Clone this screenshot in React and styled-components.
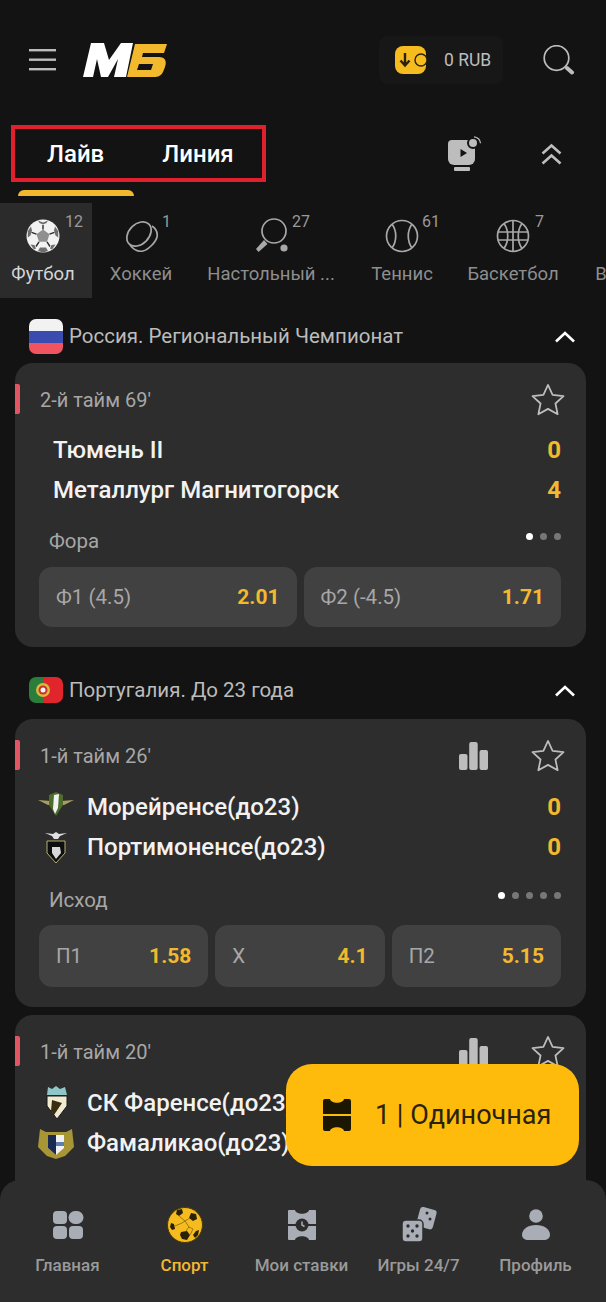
import styled, { createGlobalStyle } from 'styled-components';

const Global = createGlobalStyle`
  html, body { margin: 0; padding: 0; background: #131313; }
  * { box-sizing: border-box; }
`;

const Page = styled.div`
  position: relative;
  width: 606px;
  height: 1302px;
  overflow: hidden;
  background: #131313;
  font-family: Roboto, "Liberation Sans", sans-serif;
  color: #fff;
`;

const Header = styled.header`
  display: flex;
  align-items: center;
  height: 62px;
  margin-top: 29px;
  padding: 0 31px 0 29px;
`;

const Logo = styled.svg`
  width: 84px;
  height: 36px;
  margin-left: 27px;
`;

const Wallet = styled.div`
  display: flex;
  align-items: center;
  gap: 17px;
  width: 124px;
  height: 48px;
  margin-left: auto;
  margin-right: 40px;
  padding-left: 16px;
  background: #171717;
  border-radius: 8px;
  font-size: 17.5px;
  color: #bdbdbd;
`;

const TabsRow = styled.div`
  display: flex;
  align-items: center;
  height: 57px;
  margin: 34px 0 0 11px;
  padding-right: 44px;
`;

const TabsBox = styled.div`
  display: flex;
  align-items: center;
  width: 255px;
  height: 57px;
  border: 4px solid #e0202c;
  padding-left: 32px;
  gap: 58px;
  font-size: 24px;
  font-weight: 500;
`;

const TabTools = styled.div`
  display: flex;
  align-items: center;
  gap: 59px;
  margin-left: auto;
`;

const TabMark = styled.div`
  width: 116px;
  height: 6px;
  margin: 8px 0 0 18px;
  background: #f2b92f;
  border-radius: 6px 6px 0 0;
`;

const Sports = styled.div`
  display: flex;
  align-items: flex-start;
  height: 95px;
  margin-top: 7px;
  overflow: hidden;
`;

const Sport = styled.div`
  position: relative;
  flex: none;
  width: ${p => p.$w}px;
  height: 95px;
  display: flex;
  flex-direction: column;
  align-items: center;
  padding: 15px ${p => (p.$active ? 6 : 0)}px 0 0;
  gap: 9px;
  background: ${p => (p.$active ? '#2b2b2b' : 'transparent')};
  color: ${p => (p.$active ? '#d6d6d6' : '#8e8e8e')};
  font-size: 18.5px;
  white-space: nowrap;
`;

const SportIcon = styled.div`
  width: 36px;
  height: 36px;
`;

const Count = styled.span`
  position: absolute;
  top: 9px;
  left: calc(50% + ${p => p.$x}px);
  font-size: 16px;
  color: #9a9a9a;
`;

const League = styled.div`
  display: flex;
  align-items: center;
  height: 40px;
  margin-top: ${p => p.$mt}px;
  padding: 0 30px 0 29px;
  gap: 6px;
  font-size: 20.5px;
  color: #bcbcbc;
`;

const Flag = styled.div`
  display: flex;
  width: 34px;
  height: ${p => p.$h}px;
  border-radius: 7px;
  overflow: hidden;
  flex: none;
`;

const Chevron = styled.svg`
  width: 22px;
  height: 13px;
  margin-left: auto;
`;

const Card = styled.section`
  position: relative;
  margin: ${p => p.$mt}px 20px 0 15px;
  height: ${p => p.$h}px;
  background: #2d2d2d;
  border-radius: 18px;
  padding: 19px 25px 0 25px;
`;

const LiveMark = styled.i`
  position: absolute;
  left: 0;
  top: 21px;
  width: 5px;
  height: 30px;
  background: #e25563;
  border-radius: 0 2px 2px 0;
`;

const CardTop = styled.div`
  display: flex;
  align-items: center;
  height: 36px;
  margin-right: -6px;
  font-size: 20px;
  color: #a7a7a7;
  gap: 41px;
`;

const Period = styled.span`
  margin-right: auto;
`;

const Team = styled.div`
  display: flex;
  align-items: center;
  height: 40px;
  margin-top: ${p => p.$mt || 0}px;
  font-size: 24px;
  font-weight: 500;
  color: #f2f2f2;
  white-space: nowrap;
`;

const Crest = styled.svg`
  width: 36px;
  height: 36px;
  margin: 0 13px 0 -2px;
  flex: none;
`;

const TeamName = styled.span`
  margin-left: ${p => p.$indent || 0}px;
`;

const Score = styled.span`
  margin-left: auto;
  color: #f2b92f;
  font-weight: 700;
`;

const MarketRow = styled.div`
  display: flex;
  align-items: center;
  justify-content: space-between;
  height: 24px;
  margin: ${p => p.$mt}px 0 ${p => p.$mb}px;
  padding-left: 9px;
  font-size: 20.5px;
  color: #a7a7a7;
`;

const Dots = styled.div`
  display: flex;
  gap: 7px;
  margin-top: -9px;
`;

const Dot = styled.i`
  width: 7px;
  height: 7px;
  border-radius: 50%;
  background: ${p => (p.$on ? '#fff' : '#777')};
`;

const Odds = styled.div`
  display: flex;
  gap: 7px;
  margin-left: -1px;
`;

const Odd = styled.div`
  flex: 1;
  display: flex;
  justify-content: space-between;
  align-items: center;
  height: ${p => p.$h}px;
  padding: 0 17px;
  background: #414141;
  border-radius: 13px;
  font-size: 20.5px;
  color: #a7a7a7;
`;

const OddValue = styled.b`
  color: #f2b92f;
  font-size: 21px;
  font-weight: 700;
`;

const Slip = styled.div`
  position: absolute;
  left: 286px;
  top: 1064px;
  width: 293px;
  height: 102px;
  display: flex;
  align-items: center;
  gap: 24px;
  padding-left: 37px;
  background: #ffbb0b;
  border-radius: 26px;
  color: #2a2208;
  font-size: 27px;
  z-index: 3;
`;

const Nav = styled.nav`
  position: absolute;
  left: 0;
  right: 0;
  bottom: 0;
  height: 122px;
  display: flex;
  padding: 26px 12px 0 9px;
  background: #2d2d2d;
  border-radius: 20px 20px 0 0;
  z-index: 2;
`;

const NavItem = styled.div`
  flex: 1;
  display: flex;
  flex-direction: column;
  align-items: center;
  gap: 11px;
  font-size: 17px;
  font-weight: 500;
  color: ${p => (p.$active ? '#f2b92f' : '#9a9a9a')};
  white-space: nowrap;
`;

const NavIcon = styled.svg`
  width: 38px;
  height: 38px;
`;

const Star = () => (
  <svg width="38" height="38" viewBox="0 0 24 24" fill="none" stroke="#bdbdbd" strokeWidth="1.1" strokeLinejoin="round">
    <path d="M12 2.500l2.900 6.300 6.900.8-5.100 4.600 1.400 6.800-6.100-3.400-6.100 3.400 1.400-6.800L2.200 9.600l6.900-.8z" />
  </svg>
);

const Bars = () => (
  <svg width="29" height="28" viewBox="0 0 29 28" fill="#bdbdbd">
    <rect x="0" y="12" width="8.500" height="16" rx="2" />
    <rect x="10.200" y="0" width="8.500" height="28" rx="2" />
    <rect x="20.500" y="8" width="8.500" height="20" rx="2" />
  </svg>
);

const ChevronUp = () => (
  <Chevron viewBox="0 0 22 13" fill="none" stroke="#fff" strokeWidth="2.600">
    <path d="M2 11.500L11 3l9 8.500" />
  </Chevron>
);

const WhiteBall = () => (
  <svg width="36" height="36" viewBox="0 0 36 36">
    <circle cx="18" cy="18" r="16.500" fill="#f2f2f2" />
    <path d="M18 11.500l6.500 4.700-2.500 7.600h-8l-2.500-7.600z" fill="#8f8f8f" />
    <path d="M18 11.500V7M24.500 16.200l5-1.800M22 23.800l3 4.700M14 23.800l-3 4.700M11.500 16.200l-5-1.800" stroke="#2b2b2b" strokeWidth="1.400" />
    <path d="M13 2.500l5 2 5-2-1.500 2.500-3.500 1.500L14.500 5zM2.800 13l3.200-4.500 1 4-1.500 5-2.700 2zM33.200 13L30 8.500l-1 4 1.500 5 2.700 2zM13 33l2-3.500h6l2 3.500-5 1.500zM5.500 26.500l4 .5 1.500 3.500-2 1zM30.500 26.500l-4 .5-1.500 3.500 2 1z" fill="#6e6e6e" />
  </svg>
);

const Puck = () => (
  <svg width="36" height="36" viewBox="0 0 36 36" fill="none" stroke="#a8a8a8" strokeWidth="1.700">
    <ellipse cx="16" cy="16" rx="14" ry="10" transform="rotate(-45 16 16)" />
    <path d="M7 27c3 4 8 7 13 6 5-1 13-9 14-14 1-5-2-9-5-11" />
  </svg>
);

const Paddle = () => (
  <svg width="36" height="36" viewBox="0 0 36 36" fill="none">
    <circle cx="21" cy="13" r="12" stroke="#a8a8a8" strokeWidth="1.700" />
    <path d="M11 22l-8 9 2.500 3 9-8z" fill="#a8a8a8" />
    <circle cx="31" cy="30" r="3.600" fill="#a8a8a8" />
  </svg>
);

const Tennis = () => (
  <svg width="36" height="36" viewBox="0 0 36 36" fill="none" stroke="#a8a8a8" strokeWidth="1.700">
    <circle cx="18" cy="18" r="15.500" />
    <path d="M8 6c5 7 5 17 0 24M28 6c-5 7-5 17 0 24" />
  </svg>
);

const Basket = () => (
  <svg width="36" height="36" viewBox="0 0 36 36" fill="none" stroke="#a8a8a8" strokeWidth="1.700">
    <circle cx="18" cy="18" r="15.500" />
    <path d="M18 2.500v31M2.500 14h31M2.500 22h31M9 5.500c5 7 5 18 0 25M27 5.500c-5 7-5 18 0 25" />
  </svg>
);

const App = () => (
  <Page>
    <Global />
    <Header>
      <svg width="27" height="24" viewBox="0 0 27 24" fill="#bdbdbd">
        <rect y="1" width="27" height="2.400" />
        <rect y="10.500" width="27" height="2.400" />
        <rect y="20" width="27" height="2.400" />
      </svg>
      <Logo viewBox="0 0 84 36">
        <path d="M0 35L8 1h13l5 17L38 1h12l-7 34H31l4-18-10 18h-7l-4-18-4 18z" fill="#fff" />
        <path fillRule="evenodd" d="M52 2h32l-3 9H60l-1 4h17c6 0 8 4 6 10l-2 5c-2 4-5 5-9 5H44zM56 22l-2 6h14l2-6z" fill="#f2b92f" />
      </Logo>
      <Wallet>
        <svg width="32" height="28" viewBox="0 0 32 28">
          <rect width="31" height="28" rx="8" fill="#f6bb1f" />
          <path d="M10 7v12M5.500 14.500L10 19.500l4.500-5" fill="none" stroke="#2a2208" strokeWidth="2.400" />
          <rect x="20" y="8" width="12" height="12" rx="6" fill="#f6bb1f" stroke="#2a2208" strokeWidth="1.400" />
        </svg>
        <span>0 RUB</span>
      </Wallet>
      <svg width="32" height="30" viewBox="0 0 32 30" fill="none">
        <circle cx="13.500" cy="13" r="12.300" stroke="#bdbdbd" strokeWidth="1.700" />
        <path d="M24 23l5 4.500" stroke="#bdbdbd" strokeWidth="4" strokeLinecap="round" />
      </svg>
    </Header>
    <TabsRow>
      <TabsBox>
        <span>Лайв</span>
        <span>Линия</span>
      </TabsBox>
      <TabTools>
        <svg width="34" height="36" viewBox="0 0 34 36">
          <path d="M4 4h19a4 4 0 0 1 4 4v15a6 6 0 0 1-6 6H6a6 6 0 0 1-6-6V8a4 4 0 0 1 4-4z" fill="#bdbdbd" />
          <path d="M12.500 13l6.500 4-6.500 4z" fill="#131313" />
          <rect x="6" y="31" width="16" height="4" rx="1" fill="#bdbdbd" />
          <circle cx="25" cy="7" r="5" fill="#bdbdbd" stroke="#131313" strokeWidth="2" />
          <path d="M26 .8a7 7 0 0 1 6.500 6.500" stroke="#bdbdbd" fill="none" strokeWidth="1.300" />
        </svg>
        <svg width="21" height="22" viewBox="0 0 21 22" fill="none" stroke="#bdbdbd" strokeWidth="2.600">
          <path d="M1.500 10.500L10.500 2.500l9 8M1.500 20.500L10.500 12.500l9 8" />
        </svg>
      </TabTools>
    </TabsRow>
    <TabMark />
    <Sports>
      <Sport $active $w={92}>
        <SportIcon><WhiteBall /></SportIcon>
        <Count $x={19}>12</Count>
        Футбол
      </Sport>
      <Sport $w={98}>
        <SportIcon><Puck /></SportIcon>
        <Count $x={21}>1</Count>
        Хоккей
      </Sport>
      <Sport $w={162}>
        <SportIcon><Paddle /></SportIcon>
        <Count $x={21}>27</Count>
        Настольный ...
      </Sport>
      <Sport $w={100}>
        <SportIcon><Tennis /></SportIcon>
        <Count $x={20}>61</Count>
        Теннис
      </Sport>
      <Sport $w={122}>
        <SportIcon><Basket /></SportIcon>
        <Count $x={22}>7</Count>
        Баскетбол
      </Sport>
      <Sport $w={127}>
        <SportIcon />
        Волейбол
      </Sport>
    </Sports>
    <League $mt={18}>
      <Flag $h={35}>
        <svg width="34" height="35" viewBox="0 0 34 35">
          <rect width="34" height="12" fill="#f2f2f2" />
          <rect y="12" width="34" height="12" fill="#3b4cb0" />
          <rect y="24" width="34" height="11" fill="#ef5460" />
        </svg>
      </Flag>
      Россия. Региональный Чемпионат
      <ChevronUp />
    </League>
    <Card $h={284} $mt={7}>
      <LiveMark />
      <CardTop>
        <Period>2-й тайм 69'</Period>
        <Star />
      </CardTop>
      <Team $mt={12}>
        <TeamName $indent={13}>Тюмень II</TeamName>
        <Score>0</Score>
      </Team>
      <Team>
        <TeamName $indent={13}>Металлург Магнитогорск</TeamName>
        <Score>4</Score>
      </Team>
      <MarketRow $mt={19} $mb={14}>
        Фора
        <Dots>
          <Dot $on />
          <Dot />
          <Dot />
        </Dots>
      </MarketRow>
      <Odds>
        <Odd $h={60}>
          Ф1 (4.5)
          <OddValue>2.01</OddValue>
        </Odd>
        <Odd $h={60}>
          Ф2 (-4.5)
          <OddValue>1.71</OddValue>
        </Odd>
      </Odds>
    </Card>
    <League $mt={23}>
      <Flag $h={26}>
        <svg width="34" height="26" viewBox="0 0 34 26">
          <rect width="14" height="26" fill="#2a7d3a" />
          <rect x="14" width="20" height="26" fill="#e0262c" />
          <circle cx="14" cy="13" r="7" fill="#d9b93c" />
          <circle cx="14" cy="13" r="4.500" fill="#c8322c" />
          <circle cx="14" cy="13" r="2.500" fill="#f2f2f2" />
        </svg>
      </Flag>
      Португалия. До 23 года
      <ChevronUp />
    </League>
    <Card $h={288} $mt={9}>
      <LiveMark />
      <CardTop>
        <Period>1-й тайм 26'</Period>
        <Bars />
        <Star />
      </CardTop>
      <Team $mt={13}>
        <Crest viewBox="0 0 36 36">
          <path d="M0 11l13 1 5-2 5 2 13-1-10 5H10z" fill="#a5a060" />
          <path d="M11 6l7-3 7 3v10l-7 11-7-11z" fill="#4e6d2c" />
          <path d="M16 6l5-1-1 14-3 6-2-5z" fill="#f2f2f2" />
        </Crest>
        <TeamName>Морейренсе(до23)</TeamName>
        <Score>0</Score>
      </Team>
      <Team>
        <Crest viewBox="0 0 36 36">
          <path d="M7 4l8 1 3-2 3 2 8-1-7 3-2 3h-4l-2-3z" fill="#e0e0e0" />
          <path d="M9 12h18v12l-9 10-9-10z" fill="#0e0e0e" stroke="#b8ad70" strokeWidth="1" />
          <path d="M14 18h8l1 6-5 6-4-6z" fill="#d8d8d8" />
        </Crest>
        <TeamName>Портимоненсе(до23)</TeamName>
        <Score>0</Score>
      </Team>
      <MarketRow $mt={21} $mb={13}>
        Исход
        <Dots>
          <Dot $on />
          <Dot />
          <Dot />
          <Dot />
          <Dot />
        </Dots>
      </MarketRow>
      <Odds>
        <Odd $h={62}>
          П1
          <OddValue>1.58</OddValue>
        </Odd>
        <Odd $h={62}>
          Х
          <OddValue>4.1</OddValue>
        </Odd>
        <Odd $h={62}>
          П2
          <OddValue>5.15</OddValue>
        </Odd>
      </Odds>
    </Card>
    <Card $h={220} $mt={8}>
      <LiveMark />
      <CardTop>
        <Period>1-й тайм 20'</Period>
        <Bars />
        <Star />
      </CardTop>
      <Team $mt={13}>
        <Crest viewBox="0 0 36 36">
          <path d="M10 2l4 2 4-3 4 3 5-2 2 8H9z" fill="#8fc6c8" />
          <path d="M9 11h20v10l-10 13-10-13z" fill="#f0ead0" stroke="#1a1a1a" strokeWidth="1" />
          <path d="M14 15l10 3-8 12-3-4z" fill="#3a2c10" />
        </Crest>
        <TeamName>СК Фаренсе(до23)</TeamName>
      </Team>
      <Team>
        <Crest viewBox="0 0 36 36">
          <path d="M2 4l6 3h20l6-3 2 18-9 9-9 3-9-3-9-9z" fill="#a89535" />
          <path d="M10 10h16v13l-8 7-8-7z" fill="#f2f2f2" />
          <path d="M10 10h8v20l-8-7z" fill="#1b2a50" />
          <path d="M18 17h8v4h-8z" fill="#5c7fb0" />
        </Crest>
        <TeamName>Фамаликао(до23)</TeamName>
      </Team>
    </Card>
    <Slip>
      <svg width="28" height="32" viewBox="0 0 28 32">
        <path d="M2 0h5c1 5 13 5 14 0h5a2 2 0 0 1 2 2v13H0V2a2 2 0 0 1 2-2zM0 17h28v13a2 2 0 0 1-2 2h-5c-1-5-13-5-14 0H2a2 2 0 0 1-2-2z" fill="#1c1703" />
      </svg>
      1 | Одиночная
    </Slip>
    <Nav>
      <NavItem>
        <NavIcon viewBox="0 0 38 38" fill="#a9adb5">
          <rect x="4" y="5" width="14" height="13" rx="4" />
          <rect x="19.500" y="5" width="15" height="13" rx="6.500" />
          <rect x="4" y="20" width="14" height="13" rx="4" />
          <rect x="20" y="20" width="14" height="13" rx="4" />
        </NavIcon>
        Главная
      </NavItem>
      <NavItem $active>
        <NavIcon viewBox="0 0 38 38">
          <circle cx="19" cy="19" r="17.500" fill="#f6bb1f" stroke="#4a3a05" strokeWidth="1" />
          <path d="M11 4l5-1 1 4-4 3-3-2zM25 7l5 1 1 5-4 2-4-3zM5 17l3 1 1 5-3 1-2-3zM15 26l6-1 3 4-3 5-5-1-2-4zM30 25l3-1-1 5-3 3-2-3z" fill="#2a2208" />
          <path d="M13 10l6 5 5-3M9 20l7-3 3-2 4 6-3 4M24 29l3-6 -4-2" fill="none" stroke="#9a7a10" strokeWidth="1" />
        </NavIcon>
        Спорт
      </NavItem>
      <NavItem>
        <NavIcon viewBox="0 0 38 38" fill="#a9adb5">
          <path d="M6 4h6c1 5 13 5 14 0h6a1 1 0 0 1 1 1v13H5V5a1 1 0 0 1 1-1zM5 20h28v13a1 1 0 0 1-1 1h-6c-1-5-13-5-14 0H6a1 1 0 0 1-1-1z" />
          <circle cx="19" cy="19" r="6.500" fill="#2d2d2d" />
          <path d="M19 15.500V19l2.500 1.500" stroke="#a9adb5" strokeWidth="1.500" fill="none" />
        </NavIcon>
        Мои ставки
      </NavItem>
      <NavItem>
        <NavIcon viewBox="0 0 38 38">
          <rect x="18" y="2" width="17" height="20" rx="3" transform="rotate(15 26 12)" fill="#a9adb5" />
          <rect x="2" y="14" width="21" height="22" rx="4" fill="#a9adb5" stroke="#2d2d2d" strokeWidth="1.500" />
          <g fill="#2d2d2d">
            <circle cx="8" cy="20" r="1.700" />
            <circle cx="17" cy="20" r="1.700" />
            <circle cx="12.500" cy="25" r="1.700" />
            <circle cx="8" cy="30" r="1.700" />
            <circle cx="17" cy="30" r="1.700" />
            <circle cx="27" cy="7" r="1.500" />
            <circle cx="30" cy="13" r="1.500" />
          </g>
        </NavIcon>
        Игры 24/7
      </NavItem>
      <NavItem>
        <NavIcon viewBox="0 0 38 38" fill="#a9adb5">
          <circle cx="19" cy="10" r="6.800" />
          <path d="M5 29c0-6 6-10 14-10s14 4 14 10c0 3-3 5-6 5H11c-3 0-6-2-6-5z" />
        </NavIcon>
        Профиль
      </NavItem>
    </Nav>
  </Page>
);

export default App;
